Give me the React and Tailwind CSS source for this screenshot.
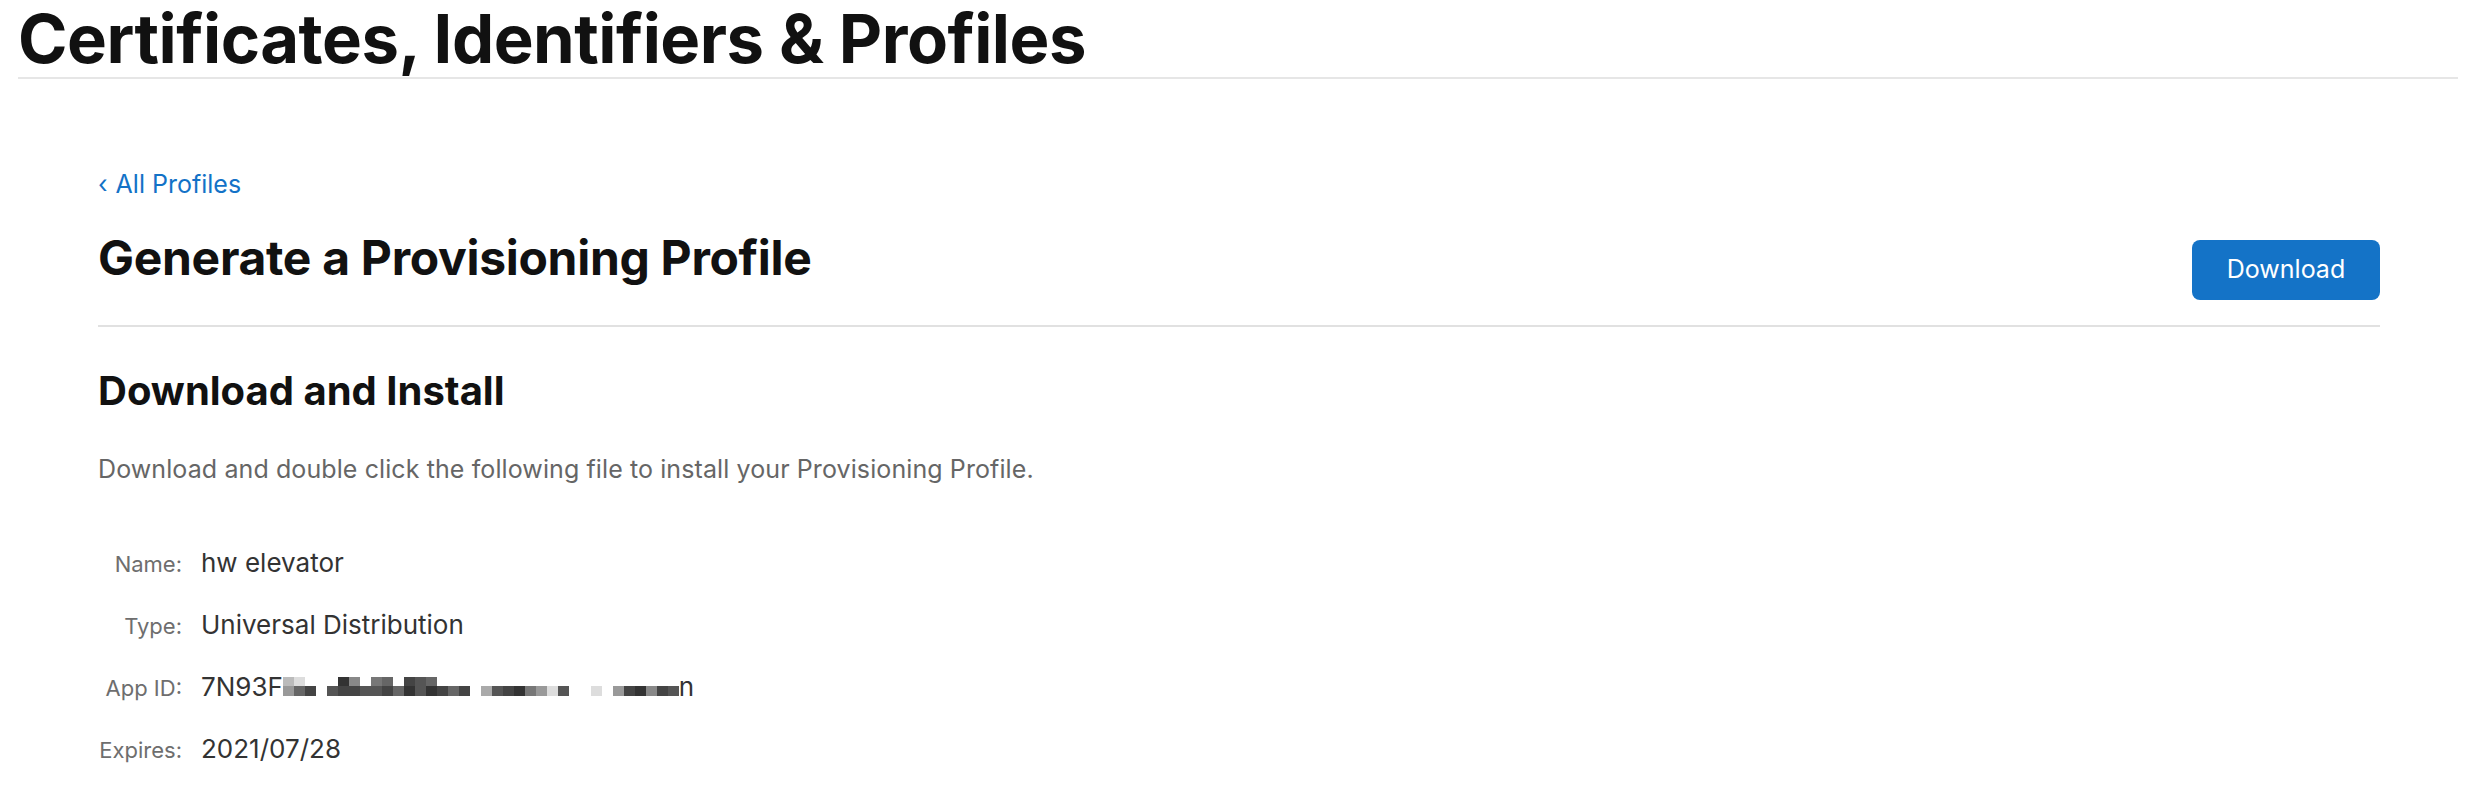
const mosaic = [
  'b9', 'd6', '-4', '--', '-5', '34', '84', '-5', '75', '64', '-6', '43',
  '55', '63', '-4', '-6', '-4', '--', '-a', '-5', '-4', '-3', '-7', '-9',
  '-d', '-5', '--', '--', '-d', '--', '-9', '-4', '-3', '-8', '-4', '-5',
];

function shade(c) {
  const map = {
    '3': '#333333', '4': '#444444', '5': '#555555', '6': '#666666', '7': '#777777',
    '8': '#888888', '9': '#999999', a: '#aaaaaa', b: '#bbbbbb', c: '#cccccc', d: '#dddddd',
  };
  return map[c] || '#ffffff';
}

function Row({ label, children }) {
  return (
    <div className="flex items-baseline h-[62px]">
      <div className="w-[84px] text-right text-[22px] text-[#6e6e6e]">{label}</div>
      <div className="ml-[19px] text-[26px] text-[#333333]">{children}</div>
    </div>
  );
}

export default function App() {
  return (
    <div className="min-h-screen bg-white font-['Inter',sans-serif] text-[#111111]">
      <div className="ml-[18px] mr-[20px] border-b-2 border-[#e6e6e6]">
        <h1 className="text-[67px] leading-[77px] font-bold tracking-[-0.5px]">
          Certificates, Identifiers &amp; Profiles
        </h1>
      </div>

      <div className="px-[98px] pt-[89px]">
        <a href="#" className="block text-[25px] leading-[32px] text-[#1372c7]">
          <span className="mr-[8px]">‹</span>All Profiles
        </a>

        <div className="flex justify-between items-start border-b-2 border-[#e1e1e1] pb-[25px] mt-[29px]">
          <h2 className="text-[48px] leading-[58px] font-bold tracking-[-0.3px]">
            Generate a Provisioning Profile
          </h2>
          <button className="mt-[11px] w-[188px] h-[60px] rounded-lg bg-[#1473c7] text-white text-[25px]">
            Download
          </button>
        </div>

        <h3 className="mt-[39px] text-[40px] leading-[50px] font-bold">
          Download and Install
        </h3>

        <p className="mt-[37px] text-[25px] leading-[32px] tracking-[0.1px] text-[#666666]">
          Download and double click the following file to install your Provisioning Profile.
        </p>

        <div className="mt-[58px]">
          <Row label="Name:">hw elevator</Row>
          <Row label="Type:">Universal Distribution</Row>
          <Row label="App ID:">
            <span className="inline-flex items-center">
              7N93F
              <span className="inline-flex">
                {mosaic.map((col, i) => (
                  <span key={i} className="flex flex-col">
                    <span className="w-[11px] h-[9px]" style={{ backgroundColor: shade(col[0]) }} />
                    <span className="w-[11px] h-[10px]" style={{ backgroundColor: shade(col[1]) }} />
                  </span>
                ))}
              </span>
              n
            </span>
          </Row>
          <Row label="Expires:">2021/07/28</Row>
        </div>
      </div>
    </div>
  );
}
